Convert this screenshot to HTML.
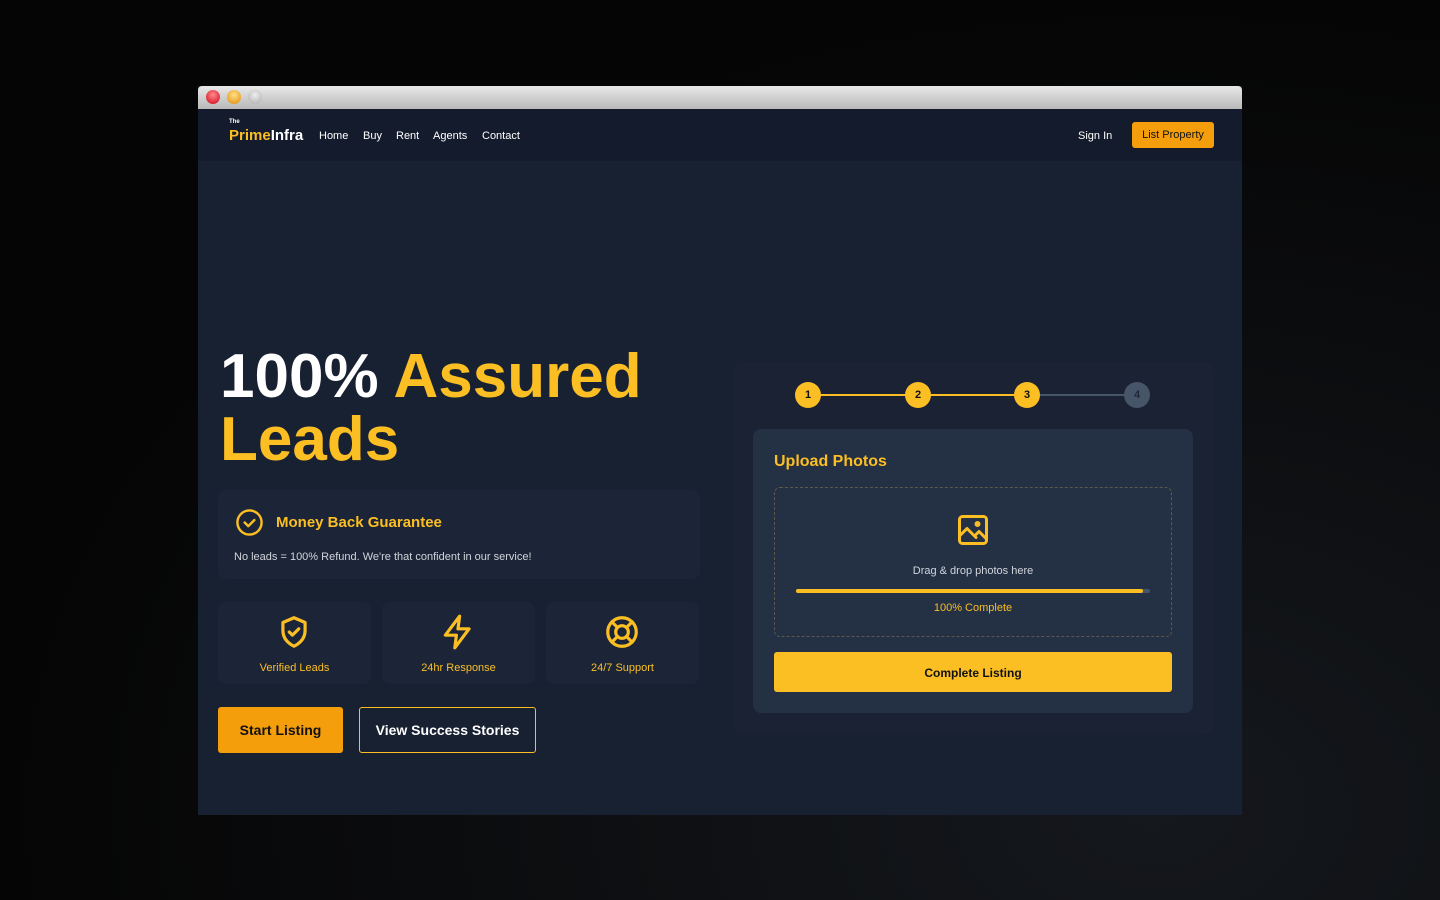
<!DOCTYPE html>
<html><head><meta charset="utf-8"><style>
*{margin:0;padding:0;box-sizing:border-box}
body{width:1440px;height:900px;background:radial-gradient(ellipse at 80% 90%,#15181d,#050505 70%);font-family:"Liberation Sans",sans-serif;position:relative;overflow:hidden}
.win{position:absolute;left:198px;top:86px;width:1044px;height:729px;background:#182132}
.tb{height:23px;background:linear-gradient(#e8e8e8,#b9b9b9);border-radius:4px 4px 0 0;position:relative}
.dot{position:absolute;top:4px;width:14px;height:14px;border-radius:50%}
nav{height:52px;background:#141b2c;position:relative;color:#fff;font-size:11px}
.a{position:absolute}
.y{color:#fbbf24}
.card{position:absolute;background:#1c2537;border-radius:8px}
</style></head><body>
<div class="win">
<div class="tb">
<div class="dot" style="left:8px;background:radial-gradient(circle at 50% 35%,#ff8a8a,#d0021b)"></div>
<div class="dot" style="left:29px;background:radial-gradient(circle at 50% 35%,#ffe08a,#e38a00)"></div>
<div class="dot" style="left:50px;background:radial-gradient(circle at 50% 35%,#eee,#aaa)"></div>
</div>
<nav>
<div class="a" style="left:31px;top:10px;font-size:6px;font-weight:bold">The</div>
<div class="a" style="left:31px;top:18px;font-size:15px;font-weight:bold"><span class="y">Prime</span>Infra</div>
<div class="a" style="left:121px;top:21px">Home</div>
<div class="a" style="left:165px;top:21px">Buy</div>
<div class="a" style="left:198px;top:21px">Rent</div>
<div class="a" style="left:235px;top:21px">Agents</div>
<div class="a" style="left:284px;top:21px">Contact</div>
<div class="a" style="left:880px;top:21px">Sign In</div>
<div class="a" style="left:934px;top:13px;width:82px;height:26px;background:#f59e0b;border-radius:3px;color:#111;text-align:center;line-height:27px">List Property</div>
</nav>
</div>
<div class="a" style="left:220px;top:345px;font-size:62px;font-weight:bold;line-height:63px;color:#fff;letter-spacing:0">100% <span class="y">Assured</span><br><span class="y">Leads</span></div>
<div class="card" style="left:218px;top:490px;width:482px;height:89px">
<svg class="a" style="left:17px;top:18px" width="29" height="29" viewBox="0 0 24 24" fill="none" stroke="#fbbf24" stroke-width="2" stroke-linecap="round" stroke-linejoin="round"><circle cx="12" cy="12" r="10"/><path d="M8 12l3 3 5-5"/></svg>
<div class="a y" style="left:58px;top:24px;font-size:15px;font-weight:bold">Money Back Guarantee</div>
<div class="a" style="left:16px;top:61px;font-size:11px;color:#d1d5db">No leads = 100% Refund. We're that confident in our service!</div>
</div>
<div class="card" style="left:218px;top:602px;width:153px;height:82px">
<svg class="a" style="left:57px;top:11px" width="38" height="38" viewBox="0 0 24 24" fill="none" stroke="#fbbf24" stroke-width="2" stroke-linecap="round" stroke-linejoin="round"><path d="M12 3l7 3v5c0 5-3 8-7 10-4-2-7-5-7-10V6z"/><path d="M9 12l2 2 4-4"/></svg>
<div class="a y" style="left:0;width:153px;text-align:center;top:60px;font-size:11px">Verified Leads</div></div>
<div class="card" style="left:382px;top:602px;width:153px;height:82px">
<svg class="a" style="left:57px;top:11px" width="38" height="38" viewBox="0 0 24 24" fill="none" stroke="#fbbf24" stroke-width="2" stroke-linecap="round" stroke-linejoin="round"><path d="M13 2L4 14h7l-1 8 9-12h-7z"/></svg>
<div class="a y" style="left:0;width:153px;text-align:center;top:60px;font-size:11px">24hr Response</div></div>
<div class="card" style="left:546px;top:602px;width:153px;height:82px">
<svg class="a" style="left:57px;top:11px" width="38" height="38" viewBox="0 0 24 24" fill="none" stroke="#fbbf24" stroke-width="2" stroke-linecap="round"><circle cx="12" cy="12" r="9"/><circle cx="12" cy="12" r="4"/><path d="M5.6 5.6l3.6 3.6M14.8 14.8l3.6 3.6M18.4 5.6l-3.6 3.6M9.2 14.8l-3.6 3.6"/></svg>
<div class="a y" style="left:0;width:153px;text-align:center;top:60px;font-size:11px">24/7 Support</div></div>
<div class="a" style="left:218px;top:707px;width:125px;height:46px;background:#f59e0b;border-radius:3px;color:#111;font-size:14px;font-weight:bold;text-align:center;line-height:47px">Start Listing</div>
<div class="a" style="left:359px;top:707px;width:177px;height:46px;border:1px solid #fbbf24;border-radius:3px;color:#fff;font-size:14px;font-weight:bold;text-align:center;line-height:45px">View Success Stories</div>
<div class="a" style="left:733px;top:362px;width:480px;height:373px;background:#1a2233;border-radius:10px"></div>
<div class="a" style="left:808px;top:394px;width:330px;height:2px;background:#475569"></div>
<div class="a" style="left:808px;top:394px;width:220px;height:2px;background:#fbbf24"></div>
<div class="a" style="left:795px;top:382px;width:26px;height:26px;border-radius:50%;background:#fbbf24;font-size:11px;font-weight:bold;text-align:center;line-height:27px;color:#111">1</div>
<div class="a" style="left:905px;top:382px;width:26px;height:26px;border-radius:50%;background:#fbbf24;font-size:11px;font-weight:bold;text-align:center;line-height:27px;color:#111">2</div>
<div class="a" style="left:1014px;top:382px;width:26px;height:26px;border-radius:50%;background:#fbbf24;font-size:11px;font-weight:bold;text-align:center;line-height:27px;color:#111">3</div>
<div class="a" style="left:1124px;top:382px;width:26px;height:26px;border-radius:50%;background:#475569;font-size:11px;font-weight:bold;text-align:center;line-height:27px;color:#1e293b">4</div>
<div class="a" style="left:753px;top:429px;width:440px;height:284px;background:#243044;border-radius:8px">
<div class="a y" style="left:21px;top:24px;font-size:16px;font-weight:bold">Upload Photos</div>
<div class="a" style="left:21px;top:58px;width:398px;height:150px;border:1px dashed #5b5a4a;border-radius:6px">
<svg class="a" style="left:180px;top:24px" width="36" height="36" viewBox="0 0 24 24" fill="none" stroke="#fbbf24" stroke-width="2" stroke-linecap="round" stroke-linejoin="round"><rect x="3" y="3" width="18" height="18" rx="2"/><circle cx="15" cy="8" r="1"/><path d="M3 16l5-5 6 6M14 15l2-2 5 5"/></svg>
<div class="a" style="left:0;width:396px;text-align:center;top:77px;font-size:11px;color:#d1d5db">Drag &amp; drop photos here</div>
<div class="a" style="left:21px;top:101px;width:354px;height:4px;background:#475569;border-radius:2px"><div style="width:347px;height:4px;background:#fbbf24;border-radius:2px"></div></div>
<div class="a y" style="left:0;width:396px;text-align:center;top:114px;font-size:11px">100% Complete</div>
</div>
<div class="a" style="left:21px;top:223px;width:398px;height:40px;background:#fbbf24;border-radius:3px;color:#111;font-size:12px;font-weight:bold;text-align:center;line-height:42px">Complete Listing</div>
</div>
</body></html>
